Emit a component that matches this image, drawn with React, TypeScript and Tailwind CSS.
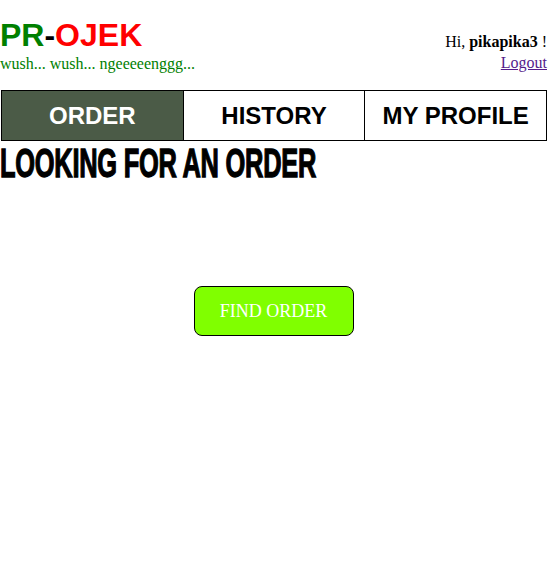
import React from 'react';

const tabs = [
  { label: 'ORDER', active: true },
  { label: 'HISTORY', active: false },
  { label: 'MY PROFILE', active: false },
];

export default function App() {
  return (
    <div className="w-[555px] h-[582px] bg-white pr-2 font-['Liberation_Serif',serif] text-black">
      <header className="flex items-start justify-between pt-[16px]">
        <div>
          <h1 className="font-['Liberation_Sans',Arial,sans-serif] text-[32px] leading-[38px] font-bold">
            <span className="text-[#008000]">PR</span>
            <span>-</span>
            <span className="text-[#ff0000]">OJEK</span>
          </h1>
          <p className="font-['Liberation_Serif',serif] text-[16px] leading-[20px] text-[#008000]">
            wush... wush... ngeeeeenggg...
          </p>
        </div>
        <div className="pt-[15px] text-right text-[16px] leading-[21px]">
          <p>
            Hi, <b>pikapika3</b> !
          </p>
          <a href="#" className="text-[#551a8b] underline">
            Logout
          </a>
        </div>
      </header>

      <nav className="mt-[16px] ml-px flex h-[51px] border border-black">
        {tabs.map((t, i) => (
          <div
            key={t.label}
            className={
              'flex flex-1 items-center justify-center font-[\'Liberation_Sans\',Arial,sans-serif] text-[24px] font-bold ' +
              (i > 0 ? 'border-l border-black ' : '') +
              (t.active ? 'bg-[#4b5b47] text-white' : 'bg-white text-black')
            }
          >
            {t.label}
          </div>
        ))}
      </nav>

      {/* Impact isn't available, so a narrow bold face is stretched and thickened */}
      <h2 className="mt-[2px] w-max origin-top-left scale-x-[0.82] scale-y-[1.32] font-['Liberation_Sans_Narrow','Liberation_Sans',sans-serif] text-[31px] leading-[32px] font-bold tracking-[-0.3px] [-webkit-text-stroke:1px_black]">
        LOOKING FOR AN ORDER
      </h2>

      <div className="mt-[111px] flex justify-center">
        <button className="h-[50px] w-[160px] rounded-[8px] border border-black bg-[#80ff00] text-[18px] text-white">
          FIND ORDER
        </button>
      </div>
    </div>
  );
}
